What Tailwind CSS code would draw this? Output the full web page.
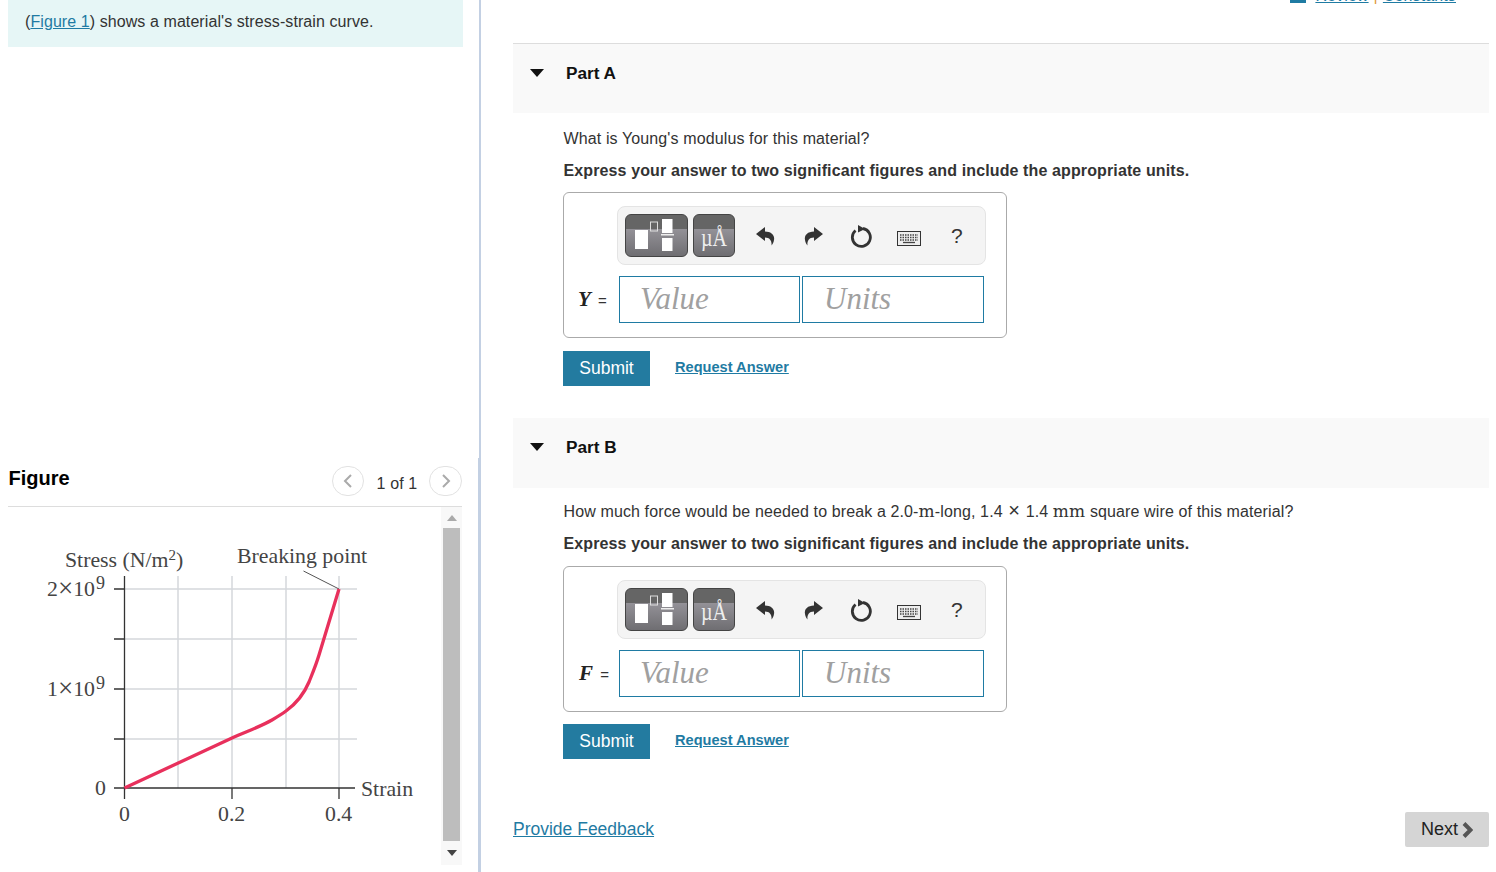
<!doctype html>
<html>
<head>
<title>Stress-strain curve</title>
<meta charset="utf-8">
<script src="https://cdn.jsdelivr.net/npm/@tailwindcss/browser@4"></script>
</head>
<body class="w-[1496px] h-[872px] overflow-hidden bg-white font-['Liberation_Sans',Arial,sans-serif] text-[#333]">
<div class="flex h-[872px] overflow-hidden">

  <!-- left pane -->
  <div class="w-[481px] h-[872px] shrink-0 border-r-2 border-[#c3d0e3] flex flex-col">
    <div class="ml-2 w-[455px] h-[47px] bg-[#e6f6f6] pl-[17px] pt-[12px] text-[16px] tracking-[0.08px] leading-5">
      (<a href="#" class="text-[#1f7ba3] underline">Figure 1</a>) shows a material's stress-strain curve.
    </div>
    <div class="mt-[411px] flex-1 w-[479px] border-r border-[#c3d0e3] pl-2 flex flex-col">
      <div class="h-[49px] w-[454px] border-b border-[#ddd] flex items-start">
        <div class="ml-[0.500px] text-[20px] font-bold text-black leading-6 mt-[8px]">Figure</div>
        <div class="ml-auto flex items-center mt-[8px]">
          <div class="w-[32px] h-[30px] rounded-full border border-[#e2e2e2] flex items-center justify-center">
            <svg width="10" height="16" viewBox="0 0 10 16"><path d="M8 2 L2 8 L8 14" fill="none" stroke="#aaa" stroke-width="2"/></svg>
          </div>
          <div class="w-[65px] pl-[1px] text-center text-[16px] tracking-[0.12px] leading-5 mt-[5px]">1 of 1</div>
          <div class="w-[33px] h-[30px] rounded-full border border-[#e2e2e2] flex items-center justify-center">
            <svg width="10" height="16" viewBox="0 0 10 16"><path d="M2 2 L8 8 L2 14" fill="none" stroke="#aaa" stroke-width="2"/></svg>
          </div>
        </div>
      </div>
      <div class="flex w-[454px] h-[358px]">
        <svg width="433" height="358" viewBox="8 507 433 358" class="font-['Liberation_Serif',serif]">
          <g stroke="#d5d8dc" stroke-width="1.5" fill="none">
            <path d="M124 589H357M124 639H357M124 689H357M124 739H357"/>
            <path d="M178 576V788M232 576V788M286 576V788M339 576V788"/>
          </g>
          <g stroke="#333" stroke-width="1.3" fill="none">
            <path d="M124.5 576V799M114 788H355"/>
            <path d="M114 589H124M114 639H124M114 689H124M114 739H124"/>
            <path d="M232 788V799M339 788V799"/>
          </g>
          <path d="M303.500 571L339 589" stroke="#555" stroke-width="1" fill="none"/>
          <path d="M124.5 788L232 738C245 732 262 726 272 720C277 717 282 714 286 711C297 703 304 694 309 682C313 672 316 665 319 655L339 589" fill="none" stroke="#e8305c" stroke-width="3.300"/>
          <g fill="#444" font-size="21.800">
            <text x="65" y="567">Stress (N/m<tspan font-size="15" dy="-7">2</tspan><tspan dy="7">)</tspan></text>
            <text x="237" y="563">Breaking point</text>
            <text x="47" y="596">2<tspan font-size="27" dy="1">×</tspan><tspan dy="-1">10</tspan><tspan font-size="18" dy="-7" dx="1">9</tspan></text>
            <text x="47" y="696">1<tspan font-size="27" dy="1">×</tspan><tspan dy="-1">10</tspan><tspan font-size="18" dy="-7" dx="1">9</tspan></text>
            <text x="95" y="795">0</text>
            <text x="119" y="821">0</text>
            <text x="218" y="821">0.2</text>
            <text x="325" y="821">0.4</text>
            <text x="361" y="796">Strain</text>
          </g>
        </svg>
        <div class="w-[21px] bg-[#f8f8f8] flex flex-col items-center">
          <div class="h-[21px] flex items-center justify-center">
            <svg width="10" height="6" viewBox="0 0 10 6"><path d="M5 0L10 6H0Z" fill="#aaa"/></svg>
          </div>
          <div class="w-[17px] h-[313px] bg-[#bdbdbd]"></div>
          <div class="flex-1 flex items-center justify-center">
            <svg width="10" height="6" viewBox="0 0 10 6"><path d="M0 0H10L5 6Z" fill="#444"/></svg>
          </div>
        </div>
      </div>
    </div>
  </div>

  <!-- right pane -->
  <div class="ml-[32px] w-[976px] shrink-0">
    <div class="h-[43px] flex justify-end pr-[33px] text-[16px] tracking-[0.12px] leading-5 text-[#1f7ba3]">
      <div class="flex items-center -mt-[14px] h-5">
        <div class="w-[16px] h-[15px] -mt-[2px] bg-[#1f7ba3] mr-[9px]"></div>
        <a href="#" class="underline">Review</a>
        <span class="mx-[5px] text-[#e09a3c]">|</span>
        <a href="#" class="underline">Constants</a>
      </div>
    </div>

    <!-- part A -->
    <section>
      <div class="h-[70px] bg-[#f9f9f9] border-t border-[#ddd] pb-[10px] flex items-center">
        <svg width="14" height="8" viewBox="0 0 14 8" class="ml-[17px] -mt-[2px]"><path d="M0 0H14L7 8Z" fill="#111"/></svg>
        <div class="ml-[22px] -mt-[2px] text-[17.200px] font-bold leading-5 text-[#111]">Part A</div>
      </div>
      <div class="pl-[50.500px]">
        <p class="mt-[16px] text-[16px] tracking-[0.12px] leading-5">What is Young's modulus for this material?</p>
        <p class="mt-[12px] text-[16px] tracking-[0.12px] leading-5 font-bold">Express your answer to two significant figures and include the appropriate units.</p>
        <div class="mt-[11px] -ml-[0.500px] w-[444px] h-[146px] border border-[#aaa] rounded-[6px] pt-[13px]">
          <div class="ml-[53px] w-[369px] h-[59px] bg-[#f4f4f4] border border-[#e4e4e4] rounded-[8px] flex items-center pl-[7px]">
            <div class="relative w-[63px] h-[43px] rounded-[6px] border border-[#444] bg-[linear-gradient(#656565_33%,#949298_33%,#6f6e72)]">
              <svg width="61" height="41" viewBox="1 1 61 41" class="absolute left-0 top-0">
                <rect x="10" y="16" width="13" height="19" fill="#fff"/>
                <rect x="25.5" y="8" width="7" height="9" fill="none" stroke="#ddd" stroke-width="1"/>
                <rect x="37" y="5" width="10.5" height="14" fill="#fff"/>
                <rect x="36" y="20" width="13" height="1.5" fill="#eee"/>
                <rect x="37" y="24" width="10.5" height="13" fill="#fff"/>
              </svg>
            </div>
            <div class="relative ml-[5px] w-[42px] h-[43px] rounded-[6px] border border-[#444] bg-[linear-gradient(#656565_33%,#949298_33%,#6f6e72)] flex items-end justify-center pb-[7px] font-['Liberation_Serif',serif] text-[20px] leading-6 text-[#eee]"><span class="scale-y-[1.3]">µÅ</span></div>
            <svg width="20" height="20" viewBox="0 0 20 20" class="ml-[20px]"><path d="M1 8L10 1V5.5C16 5.5 20 9 19 14C18.7 16.5 17.500 18.500 16.500 19.500C17 15 15 11.500 10 11.500V15Z" fill="#333"/></svg>
            <svg width="20" height="20" viewBox="0 0 20 20" class="ml-[29px]"><path d="M19 8L10 1V5.5C4 5.5 0 9 1 14C1.300 16.500 2.500 18.500 3.500 19.500C3 15 5 11.500 10 11.500V15Z" fill="#333"/></svg>
            <svg width="24" height="24" viewBox="0 0 24 24" class="ml-[26px] mt-[1px]">
              <path d="M13 4.500A9 9 0 1 1 5.500 6.500" fill="none" stroke="#333" stroke-width="2.800"/>
              <path d="M8 1L15 5L8 8.500Z" fill="#333"/>
            </svg>
            <svg width="24" height="15" viewBox="0 0 24 15" class="ml-[23px] mt-[5px]">
              <rect x="0.500" y="0.500" width="23" height="14" fill="#eee" stroke="#333"/>
              <path d="M3 4H21M3 6.500H21M3 9H21" stroke="#444" stroke-width="1.300" stroke-dasharray="1.500 1"/>
              <path d="M6 11.500H18" stroke="#444" stroke-width="1.300"/>
            </svg>
            <div class="ml-[30px] text-[21px] leading-6 text-[#333]">?</div>
          </div>
          <div class="flex items-center mt-[11px]">
            <div class="w-[55px] pl-[14px] text-[15px] whitespace-nowrap"><span class="font-['Liberation_Serif',serif] italic font-bold text-[21px] text-[#222] mr-[3px]">Y</span> =</div>
            <div class="w-[181px] h-[47px] border border-[#1f7ba3] pl-[20px] font-['Liberation_Serif',serif] italic text-[31px] leading-[43px] text-[#a0a0a0]">Value</div>
            <div class="ml-[2px] w-[182px] h-[47px] border border-[#1f7ba3] pl-[21px] font-['Liberation_Serif',serif] italic text-[31px] leading-[43px] text-[#a0a0a0]">Units</div>
          </div>
        </div>
        <div class="mt-[13px] -ml-[0.500px] flex items-center">
          <button class="w-[87px] h-[35px] bg-[#237ba0] text-white text-[17.500px]">Submit</button>
          <a href="#" class="ml-[25px] -mt-[2px] text-[14.600px] font-bold text-[#1f7ba3] underline">Request Answer</a>
        </div>
      </div>
    </section>

    <!-- part B -->
    <section class="mt-[32px]">
      <div class="h-[70px] bg-[#f9f9f9] pb-[10px] flex items-center">
        <svg width="14" height="8" viewBox="0 0 14 8" class="ml-[17px] -mt-[2px]"><path d="M0 0H14L7 8Z" fill="#111"/></svg>
        <div class="ml-[22px] -mt-[2px] text-[17.200px] font-bold leading-5 text-[#111]">Part B</div>
      </div>
      <div class="pl-[50.500px]">
        <p class="mt-[12px] h-5 text-[16px] tracking-[0.12px] leading-5">How much force would be needed to break a 2.0-<span class="font-['DejaVu_Serif',serif] text-[17px]">m</span>-long, 1.4 <span class="text-[20px] mx-[1px]">×</span> 1.4 <span class="font-['DejaVu_Serif',serif] text-[17px]">mm</span> square wire of this material?</p>
        <p class="mt-[14px] text-[16px] tracking-[0.12px] leading-5 font-bold">Express your answer to two significant figures and include the appropriate units.</p>
        <div class="mt-[12px] -ml-[0.500px] w-[444px] h-[146px] border border-[#aaa] rounded-[6px] pt-[13px]">
          <div class="ml-[53px] w-[369px] h-[59px] bg-[#f4f4f4] border border-[#e4e4e4] rounded-[8px] flex items-center pl-[7px]">
            <div class="relative w-[63px] h-[43px] rounded-[6px] border border-[#444] bg-[linear-gradient(#656565_33%,#949298_33%,#6f6e72)]">
              <svg width="61" height="41" viewBox="1 1 61 41" class="absolute left-0 top-0">
                <rect x="10" y="16" width="13" height="19" fill="#fff"/>
                <rect x="25.5" y="8" width="7" height="9" fill="none" stroke="#ddd" stroke-width="1"/>
                <rect x="37" y="5" width="10.5" height="14" fill="#fff"/>
                <rect x="36" y="20" width="13" height="1.5" fill="#eee"/>
                <rect x="37" y="24" width="10.5" height="13" fill="#fff"/>
              </svg>
            </div>
            <div class="relative ml-[5px] w-[42px] h-[43px] rounded-[6px] border border-[#444] bg-[linear-gradient(#656565_33%,#949298_33%,#6f6e72)] flex items-end justify-center pb-[7px] font-['Liberation_Serif',serif] text-[20px] leading-6 text-[#eee]"><span class="scale-y-[1.3]">µÅ</span></div>
            <svg width="20" height="20" viewBox="0 0 20 20" class="ml-[20px]"><path d="M1 8L10 1V5.5C16 5.5 20 9 19 14C18.7 16.5 17.500 18.500 16.500 19.500C17 15 15 11.500 10 11.500V15Z" fill="#333"/></svg>
            <svg width="20" height="20" viewBox="0 0 20 20" class="ml-[29px]"><path d="M19 8L10 1V5.5C4 5.5 0 9 1 14C1.300 16.500 2.500 18.500 3.500 19.500C3 15 5 11.500 10 11.500V15Z" fill="#333"/></svg>
            <svg width="24" height="24" viewBox="0 0 24 24" class="ml-[26px] mt-[1px]">
              <path d="M13 4.500A9 9 0 1 1 5.500 6.500" fill="none" stroke="#333" stroke-width="2.800"/>
              <path d="M8 1L15 5L8 8.500Z" fill="#333"/>
            </svg>
            <svg width="24" height="15" viewBox="0 0 24 15" class="ml-[23px] mt-[5px]">
              <rect x="0.500" y="0.500" width="23" height="14" fill="#eee" stroke="#333"/>
              <path d="M3 4H21M3 6.500H21M3 9H21" stroke="#444" stroke-width="1.300" stroke-dasharray="1.500 1"/>
              <path d="M6 11.500H18" stroke="#444" stroke-width="1.300"/>
            </svg>
            <div class="ml-[30px] text-[21px] leading-6 text-[#333]">?</div>
          </div>
          <div class="flex items-center mt-[11px]">
            <div class="w-[55px] pl-[15px] text-[15px] whitespace-nowrap"><span class="font-['Liberation_Serif',serif] italic font-bold text-[21px] text-[#222] mr-[3px]">F</span> =</div>
            <div class="w-[181px] h-[47px] border border-[#1f7ba3] pl-[20px] font-['Liberation_Serif',serif] italic text-[31px] leading-[43px] text-[#a0a0a0]">Value</div>
            <div class="ml-[2px] w-[182px] h-[47px] border border-[#1f7ba3] pl-[21px] font-['Liberation_Serif',serif] italic text-[31px] leading-[43px] text-[#a0a0a0]">Units</div>
          </div>
        </div>
        <div class="mt-[12px] -ml-[0.500px] flex items-center">
          <button class="w-[87px] h-[35px] bg-[#237ba0] text-white text-[17.500px]">Submit</button>
          <a href="#" class="ml-[25px] -mt-[2px] text-[14.600px] font-bold text-[#1f7ba3] underline">Request Answer</a>
        </div>
      </div>
    </section>

    <!-- footer -->
    <div class="mt-[53px] flex items-center justify-between">
      <a href="#" class="text-[17.500px] text-[#1f7ba3] underline">Provide Feedback</a>
      <button class="w-[84px] h-[35px] bg-[#d5d5d5] rounded-[2px] flex items-center justify-center text-[18px] text-[#222]">
        Next
        <svg width="11" height="16" viewBox="0 0 11 16" class="ml-[4px]"><path d="M2 1.500L8.500 8L2 14.500" fill="none" stroke="#555" stroke-width="4"/></svg>
      </button>
    </div>
  </div>
</div>
</body>
</html>
